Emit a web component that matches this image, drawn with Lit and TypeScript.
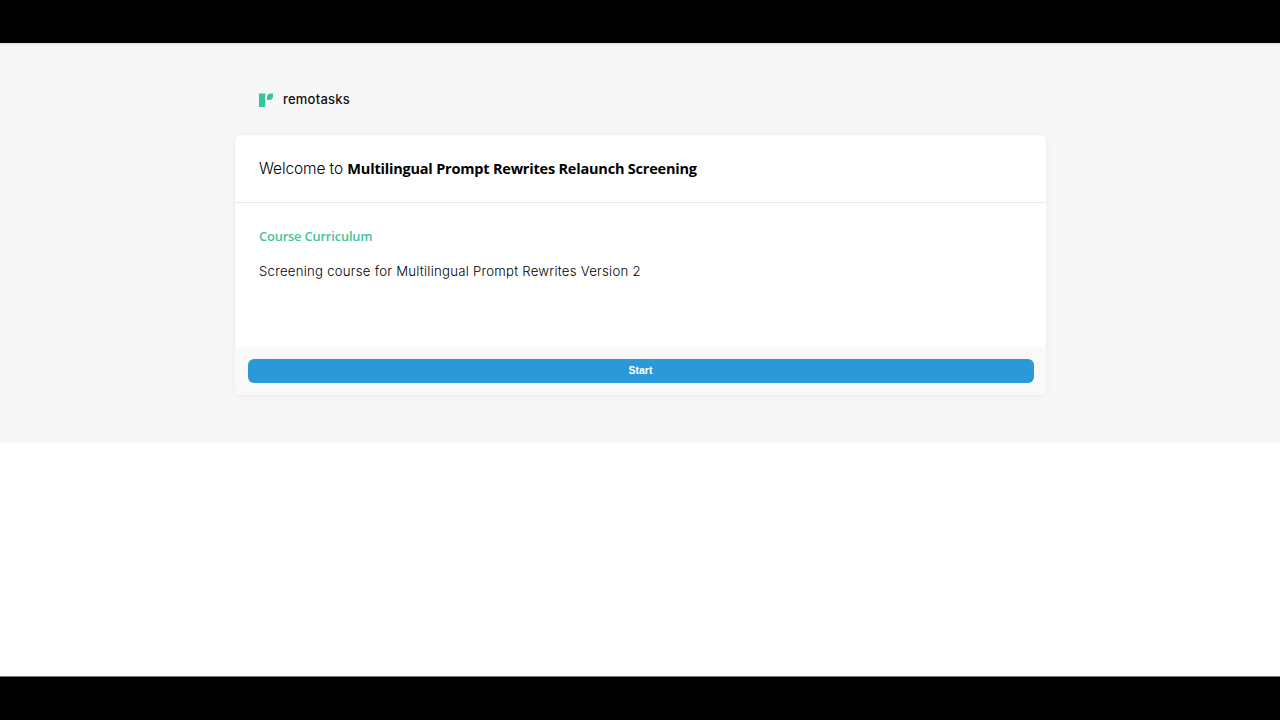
import { LitElement, html, css } from 'lit';
import { customElement, property } from 'lit/decorators.js';

@customElement('brand-logo')
export class BrandLogo extends LitElement {
  static override styles = css`
    :host {
      display: flex;
      align-items: center;
      gap: 10px;
      color: #111;
      font: 500 13px/20px Inter, sans-serif;
    }

    svg {
      display: block;
      width: 14px;
      height: 14px;
      fill: #30c79c;
    }

    .name {
      letter-spacing: 0.22px;
      margin-top: -2px;
    }
  `;

  override render() {
    return html`
      <svg viewBox="0 0 14 14">
        <path d="M0 0.5h6.2v13.5H0z" />
        <path d="M8 7V4.2C8 1.7 9.6 0.5 12 0.5h2v2.7C14 5.6 12.7 7 10.2 7z" />
      </svg>
      <span class="name">remotasks</span>
    `;
  }
}

@customElement('course-card')
export class CourseCard extends LitElement {
  @property()
  course = '';

  @property()
  description = '';

  static override styles = css`
    :host {
      display: flex;
      flex-direction: column;
      height: 260px;
      border-radius: 6px;
      overflow: hidden;
      background: #fff;
      box-shadow: 0 1px 6px rgba(0, 0, 0, 0.06);
    }

    header {
      box-sizing: border-box;
      height: 68px;
      padding: 22px 24px 21px;
      border-bottom: 1px solid #e8e8e8;
      font: 300 15.5px/24px Inter, sans-serif;
      white-space: nowrap;
    }

    .welcome {
      letter-spacing: -0.12px;
    }

    .course {
      font: 700 14.5px/24px 'Open Sans', sans-serif;
      letter-spacing: -0.2px;
    }

    section {
      flex: 1;
      padding: 23px 24px;
    }

    h2 {
      margin: 0;
      color: #3fc497;
      font: 600 12.8px/20px 'Open Sans', sans-serif;
      letter-spacing: -0.14px;
    }

    p {
      margin: 15px 0 0;
      font: 300 13.2px/20px Inter, sans-serif;
      letter-spacing: 0.24px;
    }

    footer {
      display: flex;
      padding: 12px 12px 12px 13px;
      background: #f9f9f9;
    }

    button {
      flex: 1;
      height: 24px;
      padding: 0 1px 1px 0;
      border: 0;
      border-radius: 6px;
      background: #2b98d8;
      color: #fff;
      font: 700 10.5px/23px 'Liberation Sans', sans-serif;
    }
  `;

  override render() {
    return html`
      <header>
        <span class="welcome">Welcome to</span>
        <span class="course">${this.course}</span>
      </header>
      <section>
        <h2>Course Curriculum</h2>
        <p>${this.description}</p>
      </section>
      <footer>
        <button>Start</button>
      </footer>
    `;
  }
}

@customElement('app-root')
export class AppRoot extends LitElement {
  static override styles = css`
    :host {
      display: flex;
      flex-direction: column;
      box-sizing: border-box;
      height: 720px;
      border-top: 43px solid #000;
      border-bottom: 43px solid #000;
      background: #fff;
      color: #000;
      overflow: hidden;
    }

    main {
      box-sizing: border-box;
      height: 400px;
      padding: 46px 234px 0 235px;
      border-top: 2px solid #e8e8e8;
      background: #f7f7f7;
    }

    brand-logo {
      padding-left: 24px;
      margin-bottom: 26px;
    }

    .edge {
      height: 1px;
      margin-top: auto;
      background: #777;
    }
  `;

  override render() {
    return html`
      <main>
        <brand-logo></brand-logo>
        <course-card
          course="Multilingual Prompt Rewrites Relaunch Screening"
          description="Screening course for Multilingual Prompt Rewrites Version 2"
        ></course-card>
      </main>
      <div class="edge"></div>
    `;
  }
}

declare global {
  interface HTMLElementTagNameMap {
    'brand-logo': BrandLogo;
    'course-card': CourseCard;
    'app-root': AppRoot;
  }
}
